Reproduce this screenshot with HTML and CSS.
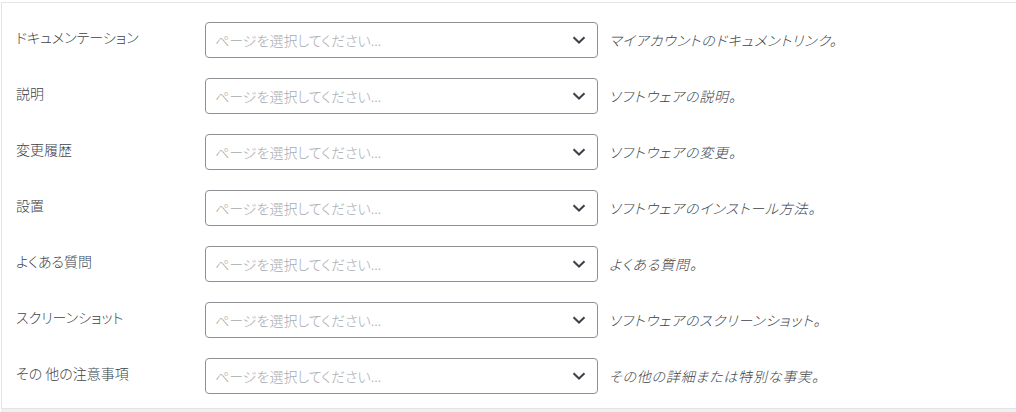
FILE: index.html
```html
<!DOCTYPE html>
<html lang="ja">
<head>
<meta charset="utf-8">
<title>設定</title>
<link rel="stylesheet" href="styles.css">
</head>
<body>
<div class="panel">
  <div class="row">
    <div class="label">ドキュメンテーション</div>
    <div class="select"><span class="ph">ページを選択してください...</span><svg class="chev" viewBox="0 0 14 8" width="14" height="8"><path d="M1.5 1.2 L7 6.5 L12.5 1.2" fill="none" stroke="#3c434a" stroke-width="2"/></svg></div>
    <div class="desc">マイアカウントのドキュメントリンク。</div>
  </div>
  <div class="row">
    <div class="label">説明</div>
    <div class="select"><span class="ph">ページを選択してください...</span><svg class="chev" viewBox="0 0 14 8" width="14" height="8"><path d="M1.5 1.2 L7 6.5 L12.5 1.2" fill="none" stroke="#3c434a" stroke-width="2"/></svg></div>
    <div class="desc">ソフトウェアの説明。</div>
  </div>
  <div class="row">
    <div class="label">変更履歴</div>
    <div class="select"><span class="ph">ページを選択してください...</span><svg class="chev" viewBox="0 0 14 8" width="14" height="8"><path d="M1.5 1.2 L7 6.5 L12.5 1.2" fill="none" stroke="#3c434a" stroke-width="2"/></svg></div>
    <div class="desc">ソフトウェアの変更。</div>
  </div>
  <div class="row">
    <div class="label">設置</div>
    <div class="select"><span class="ph">ページを選択してください...</span><svg class="chev" viewBox="0 0 14 8" width="14" height="8"><path d="M1.5 1.2 L7 6.5 L12.5 1.2" fill="none" stroke="#3c434a" stroke-width="2"/></svg></div>
    <div class="desc">ソフトウェアのインストール方法。</div>
  </div>
  <div class="row">
    <div class="label">よくある質問</div>
    <div class="select"><span class="ph">ページを選択してください...</span><svg class="chev" viewBox="0 0 14 8" width="14" height="8"><path d="M1.5 1.2 L7 6.5 L12.5 1.2" fill="none" stroke="#3c434a" stroke-width="2"/></svg></div>
    <div class="desc">よくある質問。</div>
  </div>
  <div class="row">
    <div class="label">スクリーンショット</div>
    <div class="select"><span class="ph">ページを選択してください...</span><svg class="chev" viewBox="0 0 14 8" width="14" height="8"><path d="M1.5 1.2 L7 6.5 L12.5 1.2" fill="none" stroke="#3c434a" stroke-width="2"/></svg></div>
    <div class="desc">ソフトウェアのスクリーンショット。</div>
  </div>
  <div class="row">
    <div class="label">その 他の注意事項</div>
    <div class="select"><span class="ph">ページを選択してください...</span><svg class="chev" viewBox="0 0 14 8" width="14" height="8"><path d="M1.5 1.2 L7 6.5 L12.5 1.2" fill="none" stroke="#3c434a" stroke-width="2"/></svg></div>
    <div class="desc">その他の詳細または特別な事実。</div>
  </div>
</div>
</body>
</html>
```

FILE: styles.css
```css
html, body {
  margin: 0;
  padding: 0;
}
body {
  background: #f0f0f1;
  font-family: "Noto Sans CJK JP", "Noto Sans", sans-serif;
  font-size: 14px;
  color: #2c3338;
  height: 412px;
  overflow: hidden;
  border-top: 2px solid #ffffff;
  border-left: 1px solid #ffffff;
}
.panel {
  background: #ffffff;
  border: 1px solid #e2e4e7;
  border-right: none;
  height: 407px;
  box-sizing: border-box;
  padding: 9px 0 4px 14px;
}
.row {
  display: flex;
  align-items: center;
  height: 56px;
}
.label {
  width: 189px;
  flex: none;
  font-feature-settings: "palt";
  letter-spacing: 0;
  line-height: 20px;
  margin-top: -6px;
  font-weight: 300;
  color: #3c434a;
}
.select {
  width: 393px;
  height: 36px;
  box-sizing: border-box;
  border: 1px solid #8c8f94;
  border-radius: 4px;
  display: flex;
  align-items: center;
  justify-content: space-between;
  padding: 0 11px 0 9px;
  flex: none;
}
.ph {
  color: #a7aaad;
  font-feature-settings: "palt";
  letter-spacing: 0;
  font-weight: 300;
}
.chev {
  display: block;
}
.desc {
  margin-left: 11px;
  font-style: italic;
  color: #3c434a;
  font-feature-settings: "palt";
  letter-spacing: 0.8px;
  font-weight: 300;
}
```
